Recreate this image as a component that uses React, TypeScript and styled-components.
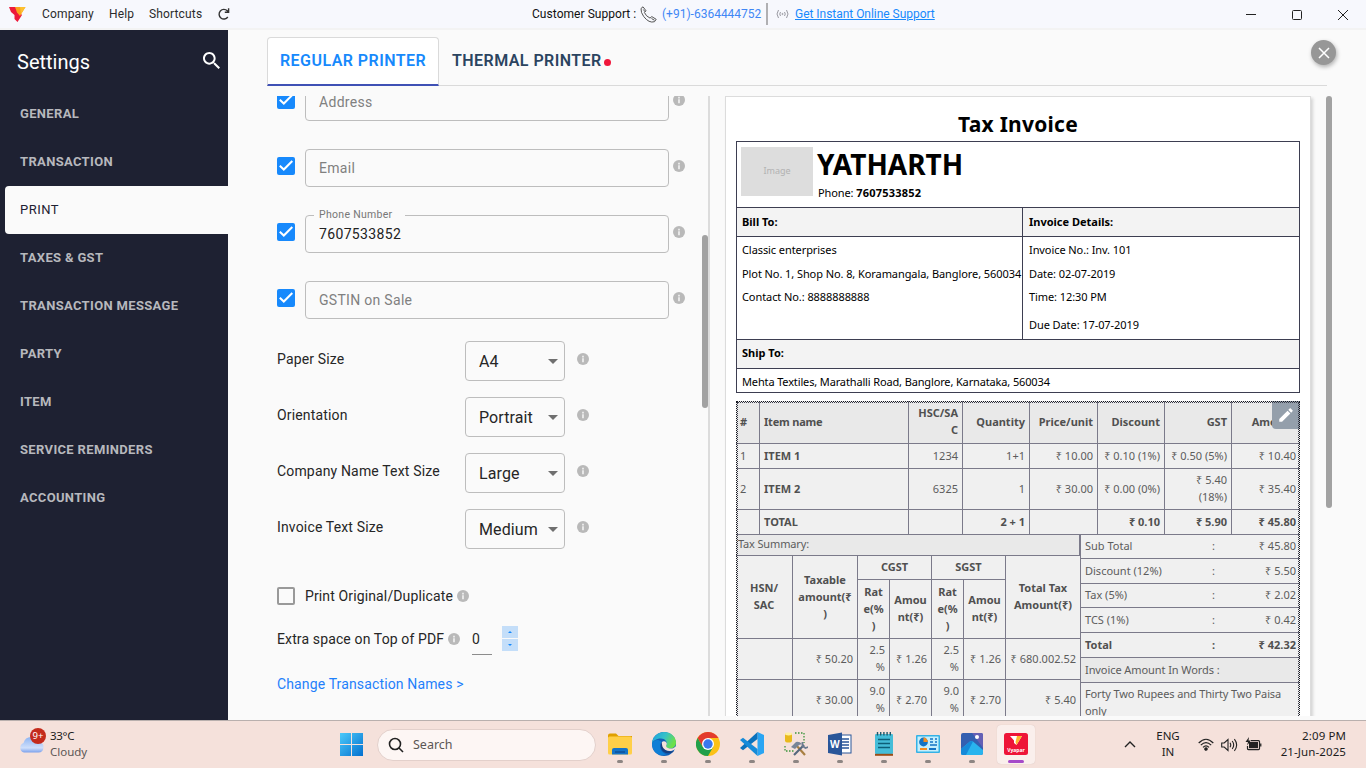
import React from "react";
import styled, { createGlobalStyle } from "styled-components";

const Global = createGlobalStyle`
  * { box-sizing: border-box; }
  body { margin: 0; background: #fafafa; font-family: Roboto, sans-serif; font-size: 14px; color: #262626; overflow: hidden; }
  svg { display: block; flex: none; }
`;

const UI_FONT = `"Noto Sans", "Open Sans", sans-serif`;

const Screen = styled.div`width: 1366px; height: 768px; display: flex; flex-direction: column; overflow: hidden;`;

/* ---------- Title bar ---------- */
const TitleBar = styled.header`
  height: 30px; flex: none; display: flex; background: #f7f8fd; border-bottom: 2px solid #f3f3f3;
  font-size: 12px; line-height: 28px; color: #2b2b2b; white-space: nowrap;
`;
const MenuGroup = styled.nav`width: 532px; display: flex; align-items: center; padding-left: 9px;`;
const MenuItem = styled.span<{ $w: number }>`width: ${p => p.$w}px; letter-spacing: 0.15px;`;
const Brand = styled.div`width: 33px;`;
const Support = styled.div`width: 706px; display: flex; align-items: center; color: #111;`;
const SupportLabel = styled.span`width: 108px; letter-spacing: 0.05px;`;
const SupportPhone = styled.span`width: 104px; margin-left: 5px; color: #3f87f5; letter-spacing: 0;`;
const SupportRule = styled.i`width: 2px; height: 22px; background: #b0b0b3; margin-right: 8px;`;
const SupportLink = styled.a`margin-left: 6px; color: #1789fc; text-decoration: underline; letter-spacing: -0.03px;`;
const WindowButtons = styled.div`flex: 1; display: flex; align-items: center; padding: 2px 0 0 8px; gap: 36px;`;

/* ---------- Body ---------- */
const Body = styled.div`flex: 1; min-height: 0; display: flex;`;
const Sidebar = styled.aside`width: 228px; background: #1e2132; color: #fff; display: flex; flex-direction: column;`;
const SidebarHead = styled.div`
  height: 60px; padding: 4px 8px 0 17px; display: flex; align-items: center; justify-content: space-between; font-size: 20px;
  svg { margin-top: -3px; }
`;
const NavItem = styled.div<{ $active?: boolean }>`
  height: 48px; margin-left: 5px; padding-left: 15px; line-height: 47px; font-size: 13px; letter-spacing: ${p => (p.$active ? 0.5 : 0.34)}px;
  border-radius: 4px 0 0 4px; font-weight: ${p => (p.$active ? 400 : 700)};
  background: ${p => (p.$active ? "#fafafa" : "transparent")}; color: ${p => (p.$active ? "#1e2132" : "#b7b8bd")};
`;
const Main = styled.main`flex: 1; display: flex; flex-direction: column; padding: 7px 34px 4px 39px; background: #fafafa;`;
const TabBar = styled.div`position: relative; height: 49px; width: 1060px; display: flex; border-bottom: 1px solid #dadada; flex: none;`;
const Tab = styled.div<{ $active?: boolean }>`
  height: 49px; width: ${p => (p.$active ? 172 : 190)}px; padding: 0 0 ${p => (p.$active ? 0 : 2)}px ${p => (p.$active ? 12 : 13)}px; line-height: 46px;
  font-size: 16px; font-weight: 600; white-space: nowrap; letter-spacing: 0.45px; color: ${p => (p.$active ? "#1789fc" : "#2b4460")};
  display: flex; align-items: center;
  ${p => p.$active && "background:#fff; border:1px solid #dadada; border-bottom:2px solid #3f51b5; border-radius:4px 4px 0 0;"}
`;
const RedDot = styled.i`width: 7px; height: 7px; border-radius: 50%; background: #f0183c; margin: 3px 0 0 2px;`;
const CloseButton = styled.button`
  position: absolute; left: 1044px; top: 3px; width: 25px; height: 25px; border: 0; padding: 0; border-radius: 50%; background: #979797;
  display: flex; align-items: center; justify-content: center; box-shadow: 1px 2px 4px rgba(0,0,0,.3);
`;
const Panels = styled.div`margin-top: 10px; flex: 1; min-height: 0; display: flex; overflow: hidden; margin-right: -6px;`;

/* ---------- Form ---------- */
const FormPane = styled.section`width: 443px; border-right: 2px solid #dcdcdc; display: flex; overflow: hidden; flex: none;`;
const Form = styled.div`width: 435px; padding-left: 10px; margin-top: -27px; height: 660px;`;
const Thumb = styled.div<{ $top: number; $h: number }>`width: 6px; height: ${p => p.$h}px; margin-top: ${p => p.$top}px; background: #a2a2a2; border-radius: 3px; flex: none;`;
const FieldRow = styled.div`height: 66px; padding-top: 14px; display: flex;`;
const Check = styled.div<{ $on?: boolean }>`
  width: 18px; height: 18px; border-radius: 2px; background: ${p => (p.$on ? "#1789fc" : "transparent")}; border: ${p => (p.$on ? "0" : "2px solid #999")};
  display: flex; align-items: center; justify-content: center; flex: none;
`;
const FieldCheck = styled.div`padding: 8px 10px 0 0;`;
const Field = styled.div<{ $filled?: boolean }>`
  position: relative; width: 364px; height: 38px; border: 1px solid #bdbdbd; border-radius: 4px; padding-left: 13px; line-height: 36px;
  letter-spacing: ${p => (p.$filled ? 0.35 : 0.3)}px; color: ${p => (p.$filled ? "#222" : "#808080")};
`;
const FloatLabel = styled.span`
  position: absolute; left: 8px; top: -9px; width: 91px; padding-left: 5px; line-height: 16px; font-size: 10.5px; letter-spacing: 0.3px; color: #777; background: #fafafa;
`;
const FieldInfo = styled.div`padding: 11px 0 0 4px;`;
const SelectRow = styled.div`height: 56px; padding-top: 8px; display: flex;`;
const SelectLabel = styled.label`width: 188px; line-height: 36px; letter-spacing: 0.16px;`;
const Select = styled.div`
  width: 100px; height: 40px; border: 1px solid #bdbdbd; border-radius: 4px; padding: 1px 6px 0 13px; display: flex; align-items: center; justify-content: space-between;
  font-size: 16px; letter-spacing: 0.1px;
`;
const Caret = styled.i`border: 5px solid transparent; border-top-color: #6f6f6f; border-bottom: 0;`;
const SelectInfo = styled.div`padding: 12px 0 0 12px;`;
const OptionRow = styled.div`height: 40px; margin-top: 18px; padding-top: 1px; display: flex; align-items: center;`;
const OptionLabel = styled.span<{ $ml?: number; $w: number }>`margin-left: ${p => p.$ml || 0}px; width: ${p => p.$w}px; letter-spacing: 0.13px; white-space: nowrap;`;
const SpaceRow = styled.div`height: 48px; display: flex; align-items: center;`;
const NumberBox = styled.div`width: 20px; height: 31px; margin-left: 12px; border-bottom: 1px solid #8c8c8c; line-height: 30px;`;
const Spinner = styled.div`margin: 0 0 2px 10px; display: grid; gap: 1px;`;
const SpinButton = styled.div<{ $up?: boolean }>`
  width: 16px; height: 12px; background: #c4def9; display: flex; align-items: center; justify-content: center;
  &::after { content: ""; border: 2.5px solid transparent; ${p => (p.$up ? "border-bottom-color:#1789fc;border-top:0;" : "border-top-color:#1789fc;border-bottom:0;")} }
`;
const LinkRow = styled.a`display: block; line-height: 42px; color: #1f80fb; letter-spacing: 0.14px;`;

/* ---------- Invoice preview ---------- */
const PreviewPane = styled.section`flex: 1; padding-left: 15px; display: flex; overflow: hidden;`;
const Paper = styled.article`
  width: 586px; margin-right: 15px; height: 700px; flex: none; padding: 0 10px; border: 1px solid #dcdcdc; background: #fff; box-shadow: 2px 2px 3px #d4d4d4;
  font-family: ${UI_FONT}; font-size: 11px; line-height: 17px; color: #000;
`;
const PaperTitle = styled.h1`margin: 0; height: 44px; padding-top: 12px; line-height: 30px; font-size: 21px; text-align: center; letter-spacing: 0.25px; font-weight: 700;`;
const LINE = "#3d3e51";
const InfoBox = styled.div`display: grid; grid-template-columns: 285px 1fr; border: 1px solid ${LINE}; border-bottom: 0; width: 564px;`;
const Company = styled.div`grid-column: 1 / 3; height: 66px; border-bottom: 1px solid ${LINE}; padding: 5px 4px; display: flex; gap: 4px;`;
const LogoBox = styled.div`width: 72px; height: 49px; background: #ddd; color: #b2b2b2; font-size: 9px; line-height: 48px; text-align: center;`;
const CompanyName = styled.div`font-size: 28px; line-height: 34px; font-weight: 700; white-space: nowrap;`;
const CompanyPhone = styled.div`margin: 3px 0 0 1px; letter-spacing: -0.1px; b { letter-spacing: 0.2px; }`;
const BoxHead = styled.div<{ $wide?: boolean; $right?: boolean }>`
  ${p => p.$wide && "grid-column: 1 / 3;"} height: 29px; line-height: ${p => (p.$wide ? 26 : 27)}px; padding-left: ${p => (p.$right ? 6 : 5)}px; background: #f3f3f3; font-weight: 700;
  border-bottom: 1px solid ${LINE}; ${p => p.$right && `border-left: 1px solid ${LINE};`}
`;
const BoxBody = styled.div<{ $right?: boolean }>`
  height: 103px; padding: 1px 0 0 ${p => (p.$right ? 6 : 5)}px; border-bottom: 1px solid ${LINE}; ${p => p.$right && `border-left: 1px solid ${LINE};`}
  white-space: nowrap; line-height: 23.5px; letter-spacing: -0.08px;
`;
const LateLine = styled.div`padding-top: 4px;`;
const ShipBody = styled.div`grid-column: 1 / 3; height: 24px; line-height: 25px; padding-left: 5px; letter-spacing: -0.14px; border-bottom: 1px solid ${LINE};`;

const GRID = "#7b7a8a";
const Editable = styled.div`position: relative; margin-top: 8px; width: 564px; height: 400px; background: #f0f0f0; color: #5c5c5c;`;
const DashFrame = styled.div`
  position: absolute; inset: 0; border: 1px dotted #15161f; pointer-events: none;
  &::before { content: ""; position: absolute; inset: 0; border: 1px dotted #3a3b48; }
`;
const EditBadge = styled.div`
  position: absolute; right: 0; top: 0; width: 28px; height: 28px; background: #949fab; border-bottom-left-radius: 4px; display: flex; align-items: center; justify-content: center;
`;
const Items = styled.div`
  display: grid; grid-template-columns: 24px 149px 54px 67px 68px 67px 67px 68px; grid-template-rows: 43px 25px 41px 25px;
`;
const Cell = styled.div<{ $b?: boolean; $h?: boolean; $a?: string; $c?: string; $r?: string; $last?: boolean }>`
  display: flex; align-items: center; justify-content: ${p => p.$a || "flex-end"}; text-align: ${p => (p.$a === "center" ? "center" : "right")};
  padding: 0 4px 2px; white-space: nowrap; font-weight: ${p => (p.$b ? 700 : 400)}; color: ${p => (p.$b ? "#505050" : "inherit")}; background: ${p => (p.$h ? "#e9e9e9" : "transparent")};
  border-right: ${p => (p.$last ? 0 : 1)}px solid ${GRID}; border-bottom: 1px solid ${GRID};
  letter-spacing: ${p => (p.$h && p.$a ? -0.2 : 0)}px;
  ${p => p.$c && `grid-column: ${p.$c};`} ${p => p.$r && `grid-row: ${p.$r};`}
`;
const Lower = styled.div`display: flex;`;
const TaxBlock = styled.div`width: 345px; border-right: 1px solid ${GRID};`;
const TaxTitle = styled.div`
  height: 21px; line-height: 18px; padding-left: 2px; letter-spacing: -0.15px; background: #e9e9e9; border-bottom: 1px solid ${GRID}; border-right: 1px solid ${GRID};
`;
const TaxGrid = styled.div`display: grid; grid-template-columns: 57px 65px 32px 42px 32px 42px 74px; grid-template-rows: 24px 59px 41px 41px;`;
const Totals = styled.div`flex: 1;`;
const TotalRow = styled.div<{ $h: number; $b?: boolean }>`
  height: ${p => p.$h}px; padding: 0 4px 2px 4px; border-bottom: 1px solid ${GRID}; display: grid; grid-template-columns: 127px 20px 1fr; align-items: center;
  font-weight: ${p => (p.$b ? 700 : 400)}; color: ${p => (p.$b ? "#505050" : "inherit")}; white-space: nowrap;
`;
const Amount = styled.span`text-align: right;`;
const WordsHead = styled.div`height: 25px; line-height: 24px; padding-left: 4px; letter-spacing: -0.08px; background: #e9e9e9; border-bottom: 1px solid ${GRID};`;
const Words = styled.div`padding: 2px 0 0 4px; letter-spacing: -0.13px; white-space: nowrap;`;

/* ---------- Taskbar ---------- */
const Taskbar = styled.footer`
  height: 48px; flex: none; border-top: 1px solid #b9b0ae; background: #f5e1db; display: flex; align-items: center; font-family: ${UI_FONT}; font-size: 12px; color: #1c1c1c;
`;
const Weather = styled.div`position: relative; width: 340px; padding-left: 19px; display: flex; gap: 6px; align-items: center;`;
const WeatherText = styled.div`margin-top: -2px; line-height: 16px; font-size: 11.5px; letter-spacing: -0.3px; span { color: #5c5654; letter-spacing: 0; }`;
const Badge = styled.span`
  position: absolute; left: 30px; top: -2px; width: 16px; height: 16px; border-radius: 50%; background: #c42b1c; color: #fff; font-size: 9.5px; line-height: 15px; text-align: center;
`;
const SearchPill = styled.div`
  margin-left: 14px; width: 219px; height: 32px; border-radius: 16px; background: #fdf6f4; border: 1px solid #e3d0cb; display: flex; align-items: center; gap: 9px; padding-left: 10px;
  color: #5b5654; font-size: 12.5px;
`;
const Apps = styled.div`display: flex; margin-left: 2px; height: 47px;`;
const AppSlot = styled.div<{ $active?: boolean }>`
  width: 38px; height: 39px; margin: 4px 3px; border-radius: 4px; display: flex; flex-direction: column; align-items: center; padding-top: 7px;
  ${p => p.$active && "background:#faefec; box-shadow: 0 0 1px #cdbcb7;"}
`;
const RunMark = styled.i<{ $active?: boolean }>`width: ${p => (p.$active ? 16 : 6)}px; height: 3px; border-radius: 2px; background: ${p => (p.$active ? "#a64ac9" : "#8d8583")}; margin-top: 4px; flex: none;`;
const Tray = styled.div`margin-left: auto; display: flex; align-items: center; padding-right: 20px;`;
const TrayText = styled.div<{ $end?: boolean; $w: number }>`
  width: ${p => p.$w}px; margin-top: -2px; text-align: ${p => (p.$end ? "right" : "center")}; font-size: 11.5px; line-height: 16px; letter-spacing: ${p => (p.$end ? 0.1 : 0)}px; white-space: nowrap;
`;
const TrayIcons = styled.div`display: flex; gap: 7px; align-items: center; margin-left: -2px;`;

const Info = () => (
  <svg width="12" height="12" viewBox="0 0 12 12">
    <circle cx="6" cy="6" r="6" fill="#b9b9b9" />
    <path d="M5.100 2.800h1.800v1.600H5.100zM5.100 5.300h1.800v3.900H5.100z" fill="#ededed" />
  </svg>
);
const Tick = () => (
  <svg width="18" height="18" viewBox="0 0 18 18" fill="none" stroke="#fff" strokeWidth="2"><path d="M2.800 8.700 6.800 12.500 15.300 4" /></svg>
);

const appIcons: React.ReactNode[] = [
  <g key="explorer"><path d="M0 3.500Q0 1.500 2 1.500H8l2.500 2.500H24V9H0z" fill="#e0a000" /><rect y="4.500" width="24" height="18" rx="1.500" fill="#ffcf48" /><path d="M4 22.500V18q0-2 2-2h12q2 0 2 2v4.500z" fill="#1473c8" /><path d="M7 20h10" stroke="#0c4f98" strokeWidth="1.500" /></g>,
  <g key="edge">
    <defs><linearGradient id="eg" x1="0" y1="0" x2="1" y2=".4"><stop offset="0" stopColor="#1a9fe0" /><stop offset=".55" stopColor="#35c1c8" /><stop offset="1" stopColor="#6be04a" /></linearGradient></defs>
    <circle cx="12" cy="12" r="12" fill="#1160b8" />
    <path d="M0 12C0 5 5.500 0 12 0c7 0 12 5 12 10.500 0 4-3 6-6 6-3.500 0-5-1.600-3.500-3.500C16 10 13 6.500 9 6.500 4 6.500.5 9 0 12z" fill="url(#eg)" />
    <path d="M9.500 10c-3 3-1.500 10.500 5 12.300C7 25.500 0 20 0 12c1-3.500 6-6 9.500-2z" fill="#0f7fd6" />
    <path d="M10 10c-2 4 1 9 7.500 9 2.500 0 4-1 5-1.600l2 -.2q0-2-1-2.700c-2 2-4 2.300-6 2-3-.5-4-2-3-3.500.8-1.400 0-3-1.500-3.500-1.200-.4-2.400-.3-3 .5z" fill="#f5e1db" />
    <path d="M10 10c-2.600 4-.8 9.500 4 11 3 .8 6 .2 8-2.200-4 1.700-13 .2-12-8.800z" fill="#173f80" />
  </g>,
  <g key="chrome">
    <circle cx="12" cy="12" r="12" fill="#fbc116" /><path d="M1.600 6A12 12 0 0 1 22.400 6H12L6.800 15z" fill="#e33b2e" /><path d="M1.600 6A12 12 0 0 0 12 24l5.200-9L12 12 6.800 15z" fill="#22a04b" /><circle cx="12" cy="12" r="6" fill="#fff" /><circle cx="12" cy="12" r="4.700" fill="#3a78ee" />
  </g>,
  <g key="code"><path d="M17.500 0 24 3v18l-6.500 3z" fill="#2aa5f3" /><path d="M17.500 0v7L3 18.200 0 16z" fill="#0b72bd" /><path d="M17.500 24v-7L3 5.800 0 8z" fill="#168bd9" /></g>,
  <g key="tools">
    <path d="M11 1h9v10M1 14v5h9" fill="none" stroke="#3b943c" strokeWidth="1.300" strokeDasharray="1.500 1.500" /><rect x="1" y="1" width="7" height="9.500" rx="2" fill="#e9b91c" /><ellipse cx="4.500" cy="2" rx="3.500" ry="1.400" fill="#fff0a0" />
    <path d="m12 13 9 10" stroke="#a87f42" strokeWidth="2.200" /><path d="m7 15 5-5q3-1 6 2l-3 1-4 4z" fill="#788598" /><path d="m10 23 10-10" stroke="#55677e" strokeWidth="2.200" /><path d="M18.500 10v4l3 2 3-1" fill="none" stroke="#6b7a8f" strokeWidth="1.800" />
  </g>,
  <g key="word"><rect x="10" y="3" width="13" height="18" fill="#fff" stroke="#2a5699" /><path d="M14 7h7M14 10h7M14 13h7M14 16h7" stroke="#2a5699" strokeWidth="1.300" /><path d="M0 3 14 .5v23L0 21z" fill="#2a5699" /><text x="6.900" y="15.800" textAnchor="middle" fill="#fff" fontFamily="Open Sans" fontWeight="700" fontSize="10">W</text></g>,
  <g key="notes"><rect x="3" y="2" width="18" height="20" rx="1" fill="#45bdd8" /><path d="M3 22.800h18" stroke="#9b4d16" strokeWidth="2" /><path d="M6 7.500h12M6 11.500h12M6 15.500h12" stroke="#0d5f78" strokeWidth="1.500" /><path d="M5.500 0v3.500M8.700 0v3.500M11.900 0v3.500M15.100 0v3.500M18.300 0v3.500" stroke="#21586a" strokeWidth="1.400" /></g>,
  <g key="panel"><rect y="3" width="24" height="18" rx="1" fill="#35b2e6" /><rect x="1.500" y="4.500" width="21" height="15" fill="#c5effc" /><circle cx="7.500" cy="10" r="4.400" fill="#1474c4" /><path d="M7.500 10V5.600a4.400 4.400 0 0 1 4.400 4.400z" fill="#f78d1e" /><path d="M14 7h3M19 7h2M14 10h3M19 10h2M14 13h7" stroke="#1474c4" strokeWidth="1.500" /><path d="M4 17h7" stroke="#f78d1e" strokeWidth="2" /><path d="M13 17h7" stroke="#1474c4" strokeWidth="2" /></g>,
  <g key="photos"><rect x="1" y="1" width="22" height="22" rx="2" fill="#345fb0" /><path d="M12 1h9q2 0 2 2v13z" fill="#6560b5" /><path d="M1 17 10 9.500q1.500-1 3 0L23 18v3q0 2-2 2H3q-2 0-2-2z" fill="#29b4ee" /><path d="M1 17 10 9.500q1.500-1 3 0L6 23H3q-2 0-2-2z" fill="#1689d8" /><circle cx="17" cy="5" r="2" fill="#fff" /></g>,
  <g key="vyapar"><rect y="1" width="24" height="22" rx="2.500" fill="#ee1538" /><path d="M6 4h12l-5.500 9-2.500-2V8.500z" fill="#fff" /><path d="M13 4h5l-5.500 9-1-3z" fill="#ffb52b" /><text x="12" y="19.500" textAnchor="middle" fill="#fff" fontFamily="Open Sans" fontWeight="700" fontSize="5">Vyapar</text></g>,
];

const NAV = ["GENERAL", "TRANSACTION", "PRINT", "TAXES & GST", "TRANSACTION MESSAGE", "PARTY", "ITEM", "SERVICE REMINDERS", "ACCOUNTING"];
const FIELDS: [string, string?][] = [["Address"], ["Email"], ["Phone Number", "7607533852"], ["GSTIN on Sale"]];
const SELECTS = [["Paper Size", "A4"], ["Orientation", "Portrait"], ["Company Name Text Size", "Large"], ["Invoice Text Size", "Medium"]];
const TOTALS: [string, string, number, boolean?][] = [
  ["Sub Total", "₹ 45.80", 24], ["Discount (12%)", "₹ 5.50", 25], ["Tax (5%)", "₹ 2.02", 24], ["TCS (1%)", "₹ 0.42", 25], ["Total", "₹ 42.32", 25, true],
];

function ItemsTable() {
  return (
    <Items>
      <Cell $h $b $a="flex-start">#</Cell><Cell $h $b $a="flex-start">Item name</Cell><Cell $h $b>HSC/SA<br />C</Cell><Cell $h $b>Quantity</Cell>
      <Cell $h $b>Price/unit</Cell><Cell $h $b>Discount</Cell><Cell $h $b>GST</Cell><Cell $h $b $last>Amount</Cell>
      <Cell $a="flex-start">1</Cell><Cell $b $a="flex-start">ITEM 1</Cell><Cell>1234</Cell><Cell>1+1</Cell><Cell>₹ 10.00</Cell><Cell>₹ 0.10 (1%)</Cell><Cell>₹ 0.50 (5%)</Cell><Cell $last>₹ 10.40</Cell>
      <Cell $a="flex-start">2</Cell><Cell $b $a="flex-start">ITEM 2</Cell><Cell>6325</Cell><Cell>1</Cell><Cell>₹ 30.00</Cell><Cell>₹ 0.00 (0%)</Cell><Cell>₹ 5.40<br />(18%)</Cell><Cell $last>₹ 35.40</Cell>
      <Cell /><Cell $b $a="flex-start">TOTAL</Cell><Cell /><Cell $b>2 + 1</Cell><Cell /><Cell $b>₹ 0.10</Cell><Cell $b>₹ 5.90</Cell><Cell $b $last>₹ 45.80</Cell>
    </Items>
  );
}

function TaxTable() {
  const sub = (rateCol: string, amtCol: string) => (
    <>
      <Cell $b $a="center" $c={rateCol} $r="2">Rat<br />e(%<br />)</Cell>
      <Cell $b $a="center" $c={amtCol} $r="2">Amou<br />nt(₹)</Cell>
    </>
  );
  const row = (taxable: string, rate: string, amt: string, total: string) => (
    <>
      <Cell /><Cell>{taxable}</Cell><Cell>{rate}<br />%</Cell><Cell>{amt}</Cell><Cell>{rate}<br />%</Cell><Cell>{amt}</Cell><Cell $last>{total}</Cell>
    </>
  );
  return (
    <TaxGrid>
      <Cell $b $a="center" $c="1" $r="1 / 3">HSN/<br />SAC</Cell>
      <Cell $b $a="center" $c="2" $r="1 / 3">Taxable<br />amount(₹<br />)</Cell>
      <Cell $b $a="center" $c="3 / 5" $r="1">CGST</Cell>
      <Cell $b $a="center" $c="5 / 7" $r="1">SGST</Cell>
      <Cell $b $a="center" $c="7" $r="1 / 3" $last>Total Tax<br />Amount(₹)</Cell>
      {sub("3", "4")}{sub("5", "6")}
      {row("₹ 50.20", "2.5", "₹ 1.26", "₹ 680.002.52")}
      {row("₹ 30.00", "9.0", "₹ 2.70", "₹ 5.40")}
    </TaxGrid>
  );
}

export default function App() {
  return (
    <Screen>
      <Global />
      <TitleBar>
        <MenuGroup>
          <Brand><svg width="17" height="15" viewBox="0 0 17 15"><path d="M0 0h7l1.500 3L13 8l-4.500 7-3-3V8L2 5z" fill="#ed1a3b" /><path d="M6 0h10.500L11 9 8 5.500z" fill="#fba31c" /><path d="M11 0h5.500L12 7z" fill="#fdc02f" /></svg></Brand>
          <MenuItem $w={67}>Company</MenuItem><MenuItem $w={40}>Help</MenuItem><MenuItem $w={69}>Shortcuts</MenuItem>
          <svg width="12" height="12" viewBox="0 0 12 12" fill="none" stroke="#333" strokeWidth="1.400"><path d="M9.800 9A4.800 4.800 0 1 1 9.300 2.800L10.500 4M10.600.3v4H6.800" /></svg>
        </MenuGroup>
        <Support>
          <SupportLabel>Customer Support :</SupportLabel>
          <svg width="17" height="17" viewBox="0 0 17 17" fill="none" stroke="#555" strokeWidth="1"><path d="M1 2.500 3 .8l3 4-1.600 1.700q1.600 3.800 5.600 5.600l1.800-1.500 4.400 2.700-1.700 2.400Q9 17.500 3.700 10.500.7 6.500 1 2.500zM3.300 3.500l1.800 2.300M11.500 12.500l3 1.800" /></svg>
          <SupportPhone>(+91)-6364444752</SupportPhone><SupportRule />
          <svg width="13" height="10" viewBox="0 0 13 10" fill="none" stroke="#9a9aa2" strokeWidth="1"><path d="M2.500 1Q-.5 5 2.500 9M4.500 3Q3 5 4.500 7M10.500 1q3 4 0 8M8.500 3Q10 5 8.500 7" /><circle cx="6.500" cy="5" r=".6" /></svg>
          <SupportLink>Get Instant Online Support</SupportLink>
        </Support>
        <WindowButtons>
          <svg width="10" height="10" stroke="#222"><path d="M0 4.500h10" /></svg>
          <svg width="10" height="10" fill="none" stroke="#222"><rect x=".5" y=".5" width="9" height="9" rx="1" /></svg>
          <svg width="10" height="10" stroke="#222"><path d="m0 0 10 10M10 0 0 10" /></svg>
        </WindowButtons>
      </TitleBar>
      <Body>
        <Sidebar>
          <SidebarHead>Settings<svg width="17" height="17" viewBox="3 3 17.500 17.500" fill="#fff"><path d="M15.500 14h-.79l-.28-.27C15.410 12.590 16 11.110 16 9.500 16 5.910 13.090 3 9.500 3S3 5.910 3 9.500 5.910 16 9.500 16c1.610 0 3.090-.59 4.230-1.570l.27.28v.79l5 4.990L20.490 19l-4.990-5zm-6 0C7.010 14 5 11.990 5 9.500S7.010 5 9.500 5 14 7.010 14 9.500 11.990 14 9.500 14z" /></svg></SidebarHead>
          {NAV.map(n => <NavItem key={n} $active={n === "PRINT"}>{n}</NavItem>)}
        </Sidebar>
        <Main>
          <TabBar>
            <Tab $active>REGULAR PRINTER</Tab>
            <Tab>THERMAL PRINTER<RedDot /></Tab>
            <CloseButton><svg width="12" height="12" stroke="#fff" strokeWidth="1.500"><path d="m1 1 10 10M11 1 1 11" /></svg></CloseButton>
          </TabBar>
          <Panels>
            <FormPane>
              <Form>
                {FIELDS.map(([label, value]) => (
                  <FieldRow key={label}>
                    <FieldCheck><Check $on><Tick /></Check></FieldCheck>
                    <Field $filled={!!value}>{value && <FloatLabel>{label}</FloatLabel>}{value || label}</Field>
                    <FieldInfo><Info /></FieldInfo>
                  </FieldRow>
                ))}
                {SELECTS.map(([label, value]) => (
                  <SelectRow key={label}><SelectLabel>{label}</SelectLabel><Select>{value}<Caret /></Select><SelectInfo><Info /></SelectInfo></SelectRow>
                ))}
                <OptionRow><Check /><OptionLabel $ml={10} $w={152}>Print Original/Duplicate</OptionLabel><Info /></OptionRow>
                <SpaceRow>
                  <OptionLabel $w={171}>Extra space on Top of PDF</OptionLabel><Info />
                  <NumberBox>0</NumberBox><Spinner><SpinButton $up /><SpinButton /></Spinner>
                </SpaceRow>
                <LinkRow>Change Transaction Names &gt;</LinkRow>
              </Form>
              <Thumb $top={139} $h={173} />
            </FormPane>
            <PreviewPane>
              <Paper>
                <PaperTitle>Tax Invoice</PaperTitle>
                <InfoBox>
                  <Company>
                    <LogoBox>Image</LogoBox>
                    <div><CompanyName>YATHARTH</CompanyName><CompanyPhone>Phone: <b>7607533852</b></CompanyPhone></div>
                  </Company>
                  <BoxHead>Bill To:</BoxHead><BoxHead $right>Invoice Details:</BoxHead>
                  <BoxBody><div>Classic enterprises</div><div>Plot No. 1, Shop No. 8, Koramangala, Banglore, 560034</div><div>Contact No.: 8888888888</div></BoxBody>
                  <BoxBody $right><div>Invoice No.: Inv. 101</div><div>Date: 02-07-2019</div><div>Time: 12:30 PM</div><LateLine>Due Date: 17-07-2019</LateLine></BoxBody>
                  <BoxHead $wide>Ship To:</BoxHead>
                  <ShipBody>Mehta Textiles, Marathalli Road, Banglore, Karnataka, 560034</ShipBody>
                </InfoBox>
                <Editable>
                  <ItemsTable />
                  <Lower>
                    <TaxBlock><TaxTitle>Tax Summary:</TaxTitle><TaxTable /></TaxBlock>
                    <Totals>
                      {TOTALS.map(([l, v, h, b]) => <TotalRow key={l} $h={h} $b={b}><span>{l}</span><span>:</span><Amount>{v}</Amount></TotalRow>)}
                      <WordsHead>Invoice Amount In Words :</WordsHead>
                      <Words>Forty Two Rupees and Thirty Two Paisa<br />only</Words>
                    </Totals>
                  </Lower>
                  <EditBadge><svg width="18" height="18" viewBox="0 0 24 24" fill="#fff"><path d="M3 17.250V21h3.750L17.810 9.940l-3.750-3.750L3 17.250zM20.710 7.040c.39-.39.39-1.020 0-1.410l-2.340-2.340c-.39-.39-1.020-.39-1.410 0l-1.830 1.830 3.750 3.750 1.830-1.830z" /></svg></EditBadge>
                  <DashFrame />
                </Editable>
              </Paper>
              <Thumb $top={0} $h={412} />
            </PreviewPane>
          </Panels>
        </Main>
      </Body>
      <Taskbar>
        <Weather>
          <svg width="25" height="17" viewBox="0 0 25 17"><defs><linearGradient id="cl" x2="0" y2="1"><stop stopColor="#8db4f2" /><stop offset=".7" stopColor="#cfdffb" /><stop offset="1" stopColor="#7ba1ec" /></linearGradient></defs><path d="M5 16.500a5 5 0 0 1-.5-9.500Q6 1 12 1q5 0 6.500 5Q25 6 24.500 11.500q-.5 5-5 5z" fill="url(#cl)" /></svg>
          <Badge>9+</Badge>
          <WeatherText>33°C<br /><span>Cloudy</span></WeatherText>
        </Weather>
        <svg width="23" height="23" viewBox="0 0 23 23"><defs><linearGradient id="wn" x2="1" y2="1"><stop stopColor="#4ccafa" /><stop offset="1" stopColor="#0370cf" /></linearGradient></defs><path d="M0 0h11v11H0zM12 0h11v11H12zM0 12h11v11H0zM12 12h11v11H12z" fill="url(#wn)" /></svg>
        <SearchPill><svg width="16" height="16" viewBox="0 0 16 16" fill="none" stroke="#222" strokeWidth="1.600"><circle cx="7" cy="7" r="5.500" /><path d="m11 11 4 4" /></svg>Search</SearchPill>
        <Apps>
          {appIcons.map((icon, i) => (
            <AppSlot key={i} $active={i === 9}><svg width="24" height="24" viewBox="0 0 24 24">{icon}</svg><RunMark $active={i === 9} /></AppSlot>
          ))}
        </Apps>
        <Tray>
          <svg width="12" height="7" fill="none" stroke="#222" strokeWidth="1.400"><path d="m1 6 5-5 5 5" /></svg>
          <TrayText $w={64}>ENG<br />IN</TrayText>
          <TrayIcons>
            <svg width="16" height="13" viewBox="0 0 16 13" fill="none" stroke="#222" strokeWidth="1.200"><path d="M.7 5Q8-2.500 15.300 5M2.800 7.200Q8 2 13.200 7.200M5 9.400Q8 6.300 11 9.400" /><circle cx="8" cy="11" r="1.200" fill="#222" /></svg>
            <svg width="17" height="14" viewBox="0 0 17 14" fill="none" stroke="#222" strokeWidth="1.100"><path d="M.7 5v4h2.500L7 12.500v-11L3.200 5zM9 4.800q1.500 2.200 0 4.400M11.200 3q3 4 0 8M13.400 1.200q4.500 5.800 0 11.600" /></svg>
            <svg width="17" height="15" viewBox="0 0 17 15" fill="none" stroke="#222" strokeWidth="1.200"><path d="M6 3.600h7.500q1 0 1 1v7q0 1-1 1h-10q-1 0-1-1V9M15.800 6.500v3" /><rect x="4" y="5" width="9" height="6.200" fill="#222" stroke="none" /><path d="M4 0 .5 5H3L2 8.500 6 3.500H3.500z" fill="#222" stroke="none" /></svg>
          </TrayIcons>
          <TrayText $w={84} $end>2:09 PM<br />21-Jun-2025</TrayText>
        </Tray>
      </Taskbar>
    </Screen>
  );
}
